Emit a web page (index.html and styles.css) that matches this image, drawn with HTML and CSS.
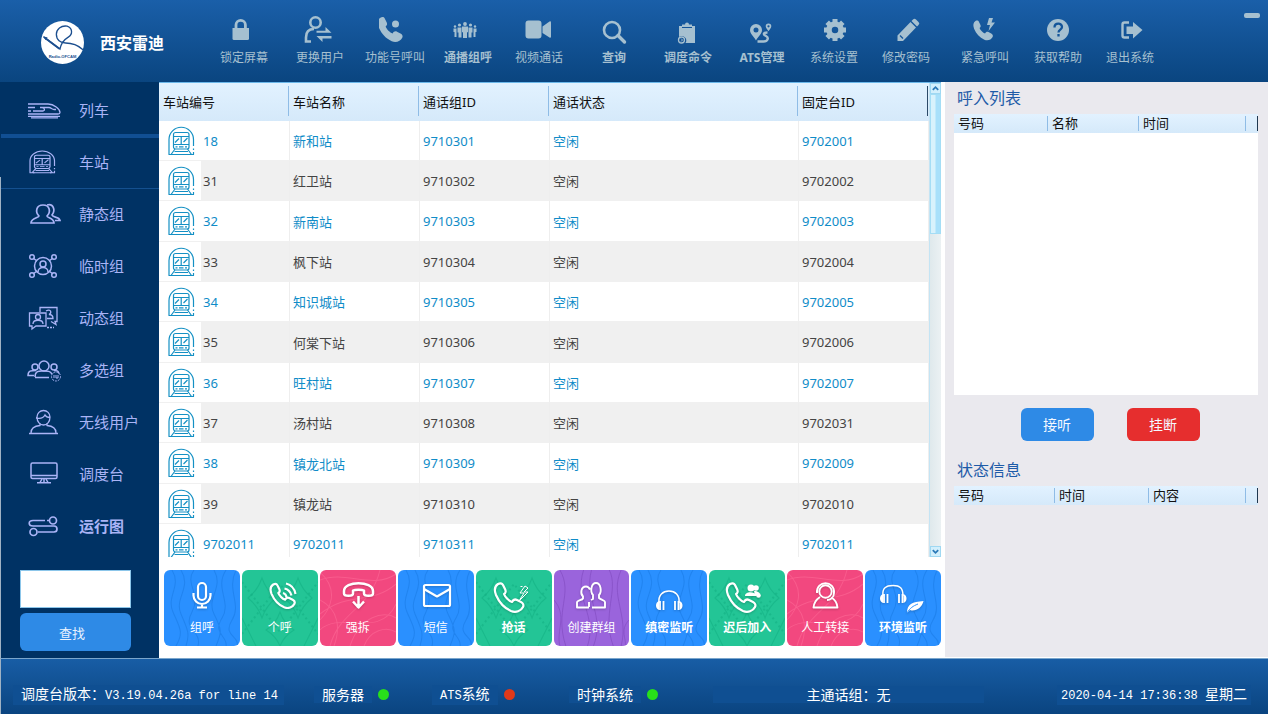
FILE: index.html
```html
<!DOCTYPE html>
<html lang="zh-CN">
<head>
<meta charset="utf-8">
<meta name="viewport" content="width=device-width, initial-scale=1">
<title>西安雷迪 调度台</title>
<link rel="stylesheet" href="styles.css">
</head>
<body>
<svg class="sprite" aria-hidden="true">
  <symbol id="station" viewBox="0 0 28 30" preserveAspectRatio="none">
    <g fill="none" stroke="currentColor" stroke-width="1.2">
      <path d="M2 28.500V13.500a12 12 0 0 1 24.500 0v6.500M26.500 22.500v1.500M26.500 26v2.500M1.500 28.500h5M22 28.500h5"/>
      <rect x="6.500" y="6.500" width="15.500" height="16.500" rx="2"/>
      <path d="M6.500 10.500h15.500M6.500 18.500h15.500M14.200 10.500v8M8 16.500l4-4M16.500 16l4-4M8.500 20.800h2M12 20.800h4.500M18 20.800h2"/>
      <path d="M8 23l-4 5.500M20.500 23l4 5.500M7.500 25.500h13.500M5 28.500h18.500"/>
    </g>
  </symbol>
  <symbol id="handset" viewBox="-1 -1 32 32">
    <path d="M4 2C1 4 0 8 2 13C5 20 10 26 17 29C22 31 27 29 29 25C30 23 29 21 27 20L23 18C21 17 19 18 18 20C15 19 11 15 10 12C12 11 12 9 11 7L9 3C8 1 6 1 4 2Z"/>
  </symbol>
</svg>

<header class="topbar">
  <div class="brand">
    <svg class="brand-logo" viewBox="0 0 42 42" role="img" aria-label="Radio-OFCAM">
      <circle cx="21" cy="21" r="21" fill="#fff"/>
      <path d="M2.500 15.500L18.500 27.500C19.500 22 22 18.500 27 15.500C31 13 31 7 25.500 5C19.500 4 15 8.500 15 13C15 18.500 19 21.500 24 21.500C31 21.500 36.500 24 41 28" fill="none" stroke="#1c4f8f" stroke-width="1.300"/>
      <path d="M2 15l4.500 1L4.500 18.500z" fill="#1c4f8f"/>
      <path d="M4 16.500L18 27" stroke="#1c4f8f" stroke-width="1.800"/>
      <text x="21" y="36" text-anchor="middle" class="logo-text">Radio-OFCAM</text>
    </svg>
    <h1>西安雷迪</h1>
  </div>
  <nav class="tools">
    <button type="button"><svg viewBox="0 0 32 32"><path d="M4.500 14h16.500v10.500a1.500 1.500 0 0 1-1.500 1.500H6a1.500 1.500 0 0 1-1.500-1.500z" fill="currentColor"/><path d="M8 14v-3a4.700 4.700 0 0 1 9.400 0v3" fill="none" stroke="currentColor" stroke-width="2.800"/></svg><span>锁定屏幕</span></button>
    <button type="button"><svg viewBox="0 0 32 32"><g fill="none" stroke="currentColor" stroke-width="2.600"><circle cx="11.500" cy="8.500" r="5.200"/><path d="M7 27.500H2v-4C2 18 5 15 10 15"/></g><path d="M12.500 16.800h9V13l6 5.800h-15zM27.500 22H12.500l6 6v-3.500h9z" fill="currentColor"/></svg><span>更换用户</span></button>
    <button type="button"><svg viewBox="0 0 32 32"><use href="#handset" x="-3" y="1" width="28" height="28" fill="currentColor"/><circle cx="16.500" cy="10" r="3.500" fill="currentColor"/></svg><span>功能号呼叫</span></button>
    <button type="button" class="strong"><svg viewBox="0 0 32 32"><g fill="currentColor"><circle cx="13" cy="10" r="1.900"/><path d="M10 12.500h6v6l-1-.5v6h-4v-6l-1 .5z"/><circle cx="7.500" cy="11" r="1.600"/><circle cx="18.500" cy="11" r="1.600"/><path d="M5.500 13.500h4v10h-3v-5h-1zM16.500 13.500h4v5h-1v5h-3zM1.500 14.500h3v8.500H2.500v-5h-1zM21.500 14.500h3v3.500h-1v5h-2z"/><circle cx="3" cy="12.500" r="1.200"/><circle cx="23" cy="12.500" r="1.200"/></g></svg><span>通播组呼</span></button>
    <button type="button"><svg viewBox="0 0 32 32"><path d="M5.500 6.500h10a3 3 0 0 1 3 3v12a3 3 0 0 1-3 3h-10a3 3 0 0 1-3-3v-12a3 3 0 0 1 3-3z" fill="currentColor"/><path d="M19.500 12.500L26.500 7.500a1 1 0 0 1 1.500.8v14.500a1 1 0 0 1-1.500.7L19.500 19z" fill="currentColor"/></svg><span>视频通话</span></button>
    <button type="button" class="strong"><svg viewBox="0 0 32 32"><circle cx="14" cy="16" r="8" fill="none" stroke="currentColor" stroke-width="2.600"/><path d="M20 21.500l6.500 6.500" stroke="currentColor" stroke-width="3.400" stroke-linecap="round"/></svg><span>查询</span></button>
    <button type="button" class="strong"><svg viewBox="0 0 32 32"><path d="M7 12h3v-1.500h3a2 2 0 0 1 4 0h3V12h3v17H13.500a4.500 4.500 0 0 0-6.500-6z" fill="currentColor"/><path d="M10 13.500h10" stroke="#135499" stroke-width="1"/><circle cx="9.500" cy="26" r="3" fill="none" stroke="currentColor" stroke-width="1.300"/><path d="M9 24.500l1.500 1.500L9 27.500" fill="none" stroke="currentColor"/></svg><span>调度命令</span></button>
    <button type="button" class="strong"><svg viewBox="0 0 32 32"><path fill-rule="evenodd" d="M10 10a6 6 0 0 1 6 6c0 4-4 6.500-6 10.500c-2-4-6-6.500-6-10.500a6 6 0 0 1 6-6zm0 3.500a2.500 2.500 0 1 0 0 5a2.500 2.500 0 0 0 0-5z" fill="currentColor"/><path fill-rule="evenodd" d="M22.500 9.500a2.800 2.800 0 0 1 2.800 2.800c0 2-1.800 3-2.800 5c-1-2-2.800-3-2.800-5a2.800 2.800 0 0 1 2.800-2.800zm0 1.700a1.100 1.100 0 1 0 0 2.200a1.100 1.100 0 0 0 0-2.200z" fill="currentColor"/><path d="M21.500 18.500C17 18.500 17 20.500 20 22S22 27.500 17.500 27.500H11.500" fill="none" stroke="currentColor" stroke-width="2.400"/></svg><span>ATS管理</span></button>
    <button type="button"><svg viewBox="0 0 32 32"><circle cx="17" cy="16" r="6" fill="none" stroke="currentColor" stroke-width="5.500"/><g stroke="currentColor" stroke-width="5"><path d="M17 5v4M17 23v4M6 16h4M24 16h4M9.200 8.200l3 3M21.800 20.800l3 3M24.800 8.200l-3 3M12.200 20.800l-3 3"/></g></svg><span>系统设置</span></button>
    <button type="button"><svg viewBox="0 0 32 32"><path d="M7.500 27v-5.500L20.500 8L26 13.500L13 27zM21.500 7l1.500-1.500a2 2 0 0 1 3 0L28.500 8a2 2 0 0 1 0 3L27 12.500z" fill="currentColor"/><path d="M10 21.500l3 3" stroke="#135499" stroke-width="1.200"/></svg><span>修改密码</span></button>
    <button type="button"><svg viewBox="0 0 32 32"><use href="#handset" x="3" y="5" width="22" height="22" fill="currentColor"/><path d="M20 4h4l-1.500 4.500H26L19.500 17l1.500-6h-3z" fill="currentColor"/></svg><span>紧急呼叫</span></button>
    <button type="button"><svg viewBox="0 0 32 32"><circle cx="16" cy="16" r="11" fill="currentColor"/><path d="M12.500 13.500c0-5 7.500-5 7.500-.5c0 2.800-3.500 2.500-3.500 5.500M16.500 20v2.500" fill="none" stroke="#135499" stroke-width="2.300"/></svg><span>获取帮助</span></button>
    <button type="button"><svg viewBox="0 0 32 32"><path d="M15 8.500H10.500a2 2 0 0 0-2 2v11a2 2 0 0 0 2 2H15" fill="none" stroke="currentColor" stroke-width="2.400"/><path d="M12.500 12.500H19V8l9.500 8L19 24.500V20h-6.500z" fill="currentColor"/></svg><span>退出系统</span></button>
  </nav>
  <button type="button" class="minimize" aria-label="最小化"></button>
</header>

<main class="workspace">
  <aside class="sidebar">
    <nav class="menu">
      <a href="#" class="first"><svg viewBox="0 0 36 28"><g fill="none" stroke="currentColor" stroke-width="1.300"><path d="M1 8h20c6 0 12 5 12 8.500c0 1-1 1.500-2 1.500H1M1 11.500h7M13 11.500h9c2 0 3 2 5 2h2M1 15h3M6 15h10c2 0 2-3.500-1-3.500M1 20.300h32M4 21.800h27"/></g></svg>列车</a>
      <a href="#" class="current"><svg viewBox="0 0 36 28"><use href="#station" x="1" y="2" width="28" height="24"/></svg>车站</a>
      <a href="#"><svg viewBox="0 0 36 28"><g fill="none" stroke="currentColor" stroke-width="1.700"><path d="M12 16C8 12 9 5 16 5s8 7 4 11c0 2 7 2 7 7H4c0-5 8-5 8-7z"/><path d="M20 5c6-2 9 5 5 10c1 3 7 1 8 5.500h-5"/></g></svg>静态组</a>
      <a href="#"><svg viewBox="0 0 36 28"><g fill="none" stroke="currentColor" stroke-width="1.500"><circle cx="16" cy="14" r="8.500"/><circle cx="16" cy="12" r="3"/><path d="M11 20c0-6 10-6 10 0M6 6l4 3M26 6l-4 3M6 22l4-3M26 22l-4-3"/><circle cx="5" cy="5" r="2.300"/><circle cx="27" cy="5" r="2.300"/><circle cx="5" cy="23" r="2.300"/><circle cx="27" cy="23" r="2.300"/></g></svg>临时组</a>
      <a href="#"><svg viewBox="0 0 36 28"><g fill="none" stroke="currentColor" stroke-width="1.300"><path d="M13 8V3.500h17v14h-2l1 3l-5-3M3 9h16v13H9l-4 3v-3H2.500V9z"/><circle cx="11" cy="13" r="2.500"/><path d="M6 20c0-5 10-5 10 0M19 7c5-3 6 2 3 3.500c3 0 4 2 4 4h-6"/><path d="M20 23.500h7" stroke-dasharray="2 1"/></g></svg>动态组</a>
      <a href="#"><svg viewBox="0 0 36 28"><g fill="none" stroke="currentColor" stroke-width="1.500"><circle cx="17" cy="10" r="5"/><circle cx="8" cy="11" r="3"/><circle cx="27" cy="11" r="3"/><path d="M8 21c0-7 5-6 9-6s6 0 8 3M8 21.500h14M7 19.500H1c0-5 3-5 8-5M27 14.500c3 0 4 0 5 3"/><circle cx="29" cy="20.500" r="4.500" stroke-width="1" stroke-dasharray="2 1"/><path d="M27 19v3M29 19v3h2v-3" stroke-width="1"/></g></svg>多选组</a>
      <a href="#"><svg viewBox="0 0 36 28"><g fill="none" stroke="currentColor" stroke-width="1.300"><path d="M10 9a6.500 6.500 0 0 1 13 0c0 5-3 8-6.500 8S10 14 10 9zM9 10c5 1 8-1 9-3c1 2 3 2.500 5 2.500"/><path d="M13 15.500v2C6 18 4 21 4 25M20 15.500v2c7 .5 9 3.500 9 7.500M2 25.500h29"/></g></svg>无线用户</a>
      <a href="#"><svg viewBox="0 0 36 28"><g fill="none" stroke="currentColor" stroke-width="1.500"><rect x="4" y="3" width="26" height="15.500" rx="1.500"/><path d="M4 15.500h26M15 19l-2 3.500M19 19l2 3.500M10 22.800h14M17 18v4"/></g></svg>调度台</a>
      <a href="#" class="strong"><svg viewBox="0 0 36 28"><g fill="none" stroke="currentColor" stroke-width="1.700"><path d="M18 8.500H6c-5 0-5 5.500 0 5.500h21c4 0 4 6 0 6H11M20 8.500h2"/><circle cx="26" cy="8.500" r="3.500"/><circle cx="6.500" cy="20" r="3.500"/></g></svg>运行图</a>
    </nav>
    <form class="search">
      <input type="text" aria-label="查找内容">
      <button type="button">查找</button>
    </form>
  </aside>

  <section class="center">
    <div class="stations">
      <table class="station-table">
        <colgroup><col class="c-no"><col class="c-mid"><col class="c-mid"><col><col class="c-mid"></colgroup>
        <thead><tr><th>车站编号</th><th>车站名称</th><th>通话组ID</th><th>通话状态</th><th>固定台ID</th></tr></thead>
        <tbody>
          <tr><td><svg><use href="#station"/></svg>18</td><td>新和站</td><td>9710301</td><td>空闲</td><td>9702001</td></tr>
          <tr><td><svg><use href="#station"/></svg>31</td><td>红卫站</td><td>9710302</td><td>空闲</td><td>9702002</td></tr>
          <tr><td><svg><use href="#station"/></svg>32</td><td>新南站</td><td>9710303</td><td>空闲</td><td>9702003</td></tr>
          <tr><td><svg><use href="#station"/></svg>33</td><td>枫下站</td><td>9710304</td><td>空闲</td><td>9702004</td></tr>
          <tr><td><svg><use href="#station"/></svg>34</td><td>知识城站</td><td>9710305</td><td>空闲</td><td>9702005</td></tr>
          <tr><td><svg><use href="#station"/></svg>35</td><td>何棠下站</td><td>9710306</td><td>空闲</td><td>9702006</td></tr>
          <tr><td><svg><use href="#station"/></svg>36</td><td>旺村站</td><td>9710307</td><td>空闲</td><td>9702007</td></tr>
          <tr><td><svg><use href="#station"/></svg>37</td><td>汤村站</td><td>9710308</td><td>空闲</td><td>9702031</td></tr>
          <tr><td><svg><use href="#station"/></svg>38</td><td>镇龙北站</td><td>9710309</td><td>空闲</td><td>9702009</td></tr>
          <tr><td><svg><use href="#station"/></svg>39</td><td>镇龙站</td><td>9710310</td><td>空闲</td><td>9702010</td></tr>
          <tr><td><svg><use href="#station"/></svg>9702011</td><td>9702011</td><td>9710311</td><td>空闲</td><td>9702011</td></tr>
        </tbody>
      </table>
      <div class="scroller">
        <button type="button" aria-label="向上"><svg viewBox="0 0 10 10"><path d="M2 6.500l3-3l3 3"/></svg></button>
        <div class="track"><div class="thumb"></div></div>
        <button type="button" aria-label="向下"><svg viewBox="0 0 10 10"><path d="M2 3.500l3 3l3-3"/></svg></button>
      </div>
    </div>
    <div class="actions">
      <button type="button" class="blue"><svg viewBox="0 0 48 36"><g><rect x="20" y="5" width="8" height="17" rx="4"/><path d="M15.500 15v2.500a8.500 8.500 0 0 0 17 0V15M24 26v3M19 29.500h10"/></g></svg><span>组呼</span></button>
      <button type="button" class="green"><svg viewBox="0 0 48 36"><use href="#handset" x="13" y="4" width="27" height="27" fill="none" stroke="currentColor" stroke-width="2.600"/><path d="M28.500 10.500c4 1 6 3 7 7M30 5.500c6 1.500 8.500 5 9.500 10.500M27 15c2 .5 3 1.500 3.500 4" fill="none"/></svg><span>个呼</span></button>
      <button type="button" class="pink"><svg viewBox="0 0 48 36"><g stroke-width="2.500"><path d="M10 13c0-10.500 29-10.500 29 0v2.500c0 3-9 3-9 0v-3c-2-1-9-1-11 0v3c0 3-9 3-9 0zM24.500 18v11M19 23.500l5.500 6l5.500-6"/></g></svg><span>强拆</span></button>
      <button type="button" class="blue"><svg viewBox="0 0 48 36"><rect x="12" y="7" width="26" height="21" rx="1.500"/><path d="M12 11l13 7.500L38 11"/></svg><span>短信</span></button>
      <button type="button" class="green strong"><svg viewBox="0 0 48 36"><use href="#handset" x="3" y="3" width="32" height="32" fill="none" stroke="currentColor" stroke-width="2.200"/><path d="M35 8l-5 7h4l-5 8l9-9h-4l4-4zM30.500 8.500h2" stroke-width="1"/></svg><span>抢话</span></button>
      <button type="button" class="purple"><svg viewBox="0 0 48 36"><g stroke-width="1.900"><path d="M25 29.500h13v-5.500c0-2-4-2-6-4v-3c3-3 2-12-3-12s-6 9-3 12v4l-2 1M22 29.500H10v-5c0-2.500 5-2 6-4v-2c-3-3-2-10 3-10c2 0 3 1 4 3M22 29v-5"/></g></svg><span>创建群组</span></button>
      <button type="button" class="blue strong"><svg viewBox="0 0 48 36"><path d="M14 25c-1-8 4-12 10-12s11 4 10 12" stroke-width="1.500"/><path d="M15 23v9M18.500 23v9M30 23v9M33.500 23v9" stroke-width="1.800"/><path d="M14 23c-4 1-4 8 0 9zM34.500 23c4 1 4 8 0 9z" class="solid"/></svg><span>缜密监听</span></button>
      <button type="button" class="green strong"><svg viewBox="0 0 48 36"><use href="#handset" x="2" y="3" width="32" height="32" fill="none" stroke="currentColor" stroke-width="2.200"/><g class="solid"><circle cx="28" cy="10" r="3.500"/><circle cx="33" cy="10" r="2.800"/><path d="M22 18c0-5 10-5 12 0zM31 13c4 0 6 2 6 4h-5z"/><circle cx="35.500" cy="17.500" r="2.300"/></g></svg><span>迟后加入</span></button>
      <button type="button" class="pink"><svg viewBox="0 0 48 36"><g stroke-width="1.900"><circle cx="24.500" cy="13.500" r="6.200"/><path d="M16 15c-1-13 18-13 17 0c0 5-4 7-7 7M19 19c-3 2-6 5-6.500 10.500h24C36 24 33 21 30 19.500"/></g></svg><span>人工转接</span></button>
      <button type="button" class="blue strong"><svg viewBox="0 0 48 36"><path d="M4 18C3 10 7 7.500 14 7.500S24 10 24 18" stroke-width="1.500"/><path d="M5 16v9M8.500 16v9M20 16v9M23.500 16v9" stroke-width="1.800"/><path d="M4 16c-4 1-4 8 0 9zM24.500 16c4 1 4 8 0 9z" class="solid"/><path d="M28 35c0-9 5-11 16.500-12C43 30 36 34 31 32z" class="solid"/><path d="M28 35c3-5 6-7 11-9" stroke="#2a90ff" stroke-width="1"/></svg><span>环境监听</span></button>
    </div>
  </section>

  <aside class="calls">
    <h2>呼入列表</h2>
    <div class="call-box">
      <table class="mini">
        <colgroup><col class="m-94"><col class="m-91"><col><col class="m-12"></colgroup>
        <thead><tr><th>号码</th><th>名称</th><th>时间</th><th></th></tr></thead>
      </table>
    </div>
    <div class="call-buttons">
      <button type="button" class="answer">接听</button>
      <button type="button" class="hangup">挂断</button>
    </div>
    <h2>状态信息</h2>
    <table class="mini">
      <colgroup><col class="m-101"><col class="m-94"><col><col class="m-12"></colgroup>
      <thead><tr><th>号码</th><th>时间</th><th>内容</th><th></th></tr></thead>
    </table>
  </aside>
</main>

<footer class="statusbar">
  <div><span class="chip wide">调度台版本：<span class="mono">V3.19.04.26a for line 14</span></span></div>
  <div><span class="chip">服务器</span><i class="dot on"></i></div>
  <div><span class="chip"><span class="mono">ATS</span>系统</span><i class="dot off"></i></div>
  <div><span class="chip">时钟系统</span><i class="dot on"></i></div>
  <div><span class="chip wide centered">主通话组：无</span></div>
  <div><span class="chip time"><span class="mono">2020-04-14 17:36:38 </span>星期二</span></div>
</footer>
</body>
</html>
```

FILE: styles.css
```css
* {
  box-sizing: border-box;
}

body {
  margin: 0;
  height: 100vh;
  display: flex;
  flex-direction: column;
  overflow: hidden;
  background: #fff;
  font-family: "Noto Sans", "Noto Sans CJK SC", sans-serif;
  font-size: 13px;
}

button,
input {
  font-family: inherit;
  margin: 0;
}

button {
  border: 0;
  padding: 0;
  background: none;
  cursor: pointer;
}

.sprite {
  display: none;
}

/* top bar */

.topbar {
  display: flex;
  height: 82px;
  background: linear-gradient(#1a5fa9, #0a4580);
}

.brand {
  display: flex;
  align-items: center;
  gap: 16px;
  width: 206px;
  padding: 2px 0 0 41px;
  color: #fff;
}

.brand-logo {
  width: 43px;
  height: 43px;
  flex: none;
}

.logo-text {
  font: bold 4px "Liberation Sans", sans-serif;
  fill: #1c4f8f;
}

.brand h1 {
  margin: 0;
  font-size: 16px;
  white-space: nowrap;
}

.tools {
  flex: 1;
  display: grid;
  grid-template-columns: 76fr 76fr 74fr 72fr 70fr 80fr 68fr 80fr 64fr 80fr 78fr 68fr 76fr;
  align-items: start;
  padding-top: 14px;
}

.tools button {
  display: flex;
  flex-direction: column;
  align-items: center;
  gap: 3px;
  color: #a6c0d0;
  font-size: 12px;
  line-height: 18px;
  white-space: nowrap;
}

.tools svg {
  width: 32px;
  height: 32px;
}

.tools .strong,
.menu .strong,
.actions .strong {
  font-weight: bold;
}

.minimize {
  width: 16px;
  height: 5px;
  margin: 13px 8px 0 76px;
  border-radius: 2px;
  background: #a6c0d0;
}

/* workspace */

.workspace {
  flex: 1;
  min-height: 0;
  display: flex;
}

.sidebar {
  width: 159px;
  flex: none;
  display: flex;
  flex-direction: column;
  justify-content: space-between;
  padding-left: 1px;
  background: linear-gradient(#9fb2c4, #9fb2c4) 0 100% / 1px calc(100% - 95px) no-repeat #003264;
}

.menu a {
  display: flex;
  align-items: center;
  gap: 16px;
  height: 52px;
  padding: 0 0 3px 26px;
  color: #aab4f6;
  font-size: 15px;
  text-decoration: none;
  white-space: nowrap;
}

.menu .first {
  height: 56px;
  padding: 3px 0 0 26px;
  border-bottom: 4px solid #114f93;
}

.menu .current {
  height: 51px;
  border-bottom: 1px solid #14508f;
}

.menu svg {
  width: 36px;
  height: 28px;
  flex: none;
}

.search {
  display: flex;
  flex-direction: column;
  gap: 5px;
  padding: 0 28px 7px 19px;
}

.search input {
  width: 100%;
  height: 38px;
  border: 1px solid #8cc6ea;
  background: #fff;
}

.search button {
  height: 38px;
  padding-right: 7px;
  border-radius: 6px;
  background: #2e8ae6;
  color: #e8f2ff;
  font-size: 13px;
}

/* station list */

.center {
  flex: 1;
  min-width: 0;
  display: flex;
  flex-direction: column;
  padding-right: 4px;
}

.stations {
  flex: 1;
  min-height: 0;
  overflow: hidden;
  display: flex;
  align-items: flex-start;
  border-top: 1px solid #6cb8ea;
}

.station-table {
  flex: 1;
  width: 100%;
  table-layout: fixed;
  border-collapse: separate;
  border-spacing: 0;
}

.c-no {
  width: 131px;
}

.c-mid {
  width: 130px;
}

.station-table thead tr {
  background: linear-gradient(#e2f2ff, #d5e9fa);
}

.station-table th {
  height: 38px;
  padding: 0 0 1px 3px;
  background: linear-gradient(#8fbce6, #8fbce6) calc(100% - 1px) 3px / 1px 30px no-repeat;
  color: #111;
  font-weight: normal;
  text-align: left;
}

.station-table th:first-child {
  padding-left: 4px;
}

.station-table th:last-child {
  background-image: linear-gradient(#2c4a68, #2c4a68);
}

.station-table td {
  height: 40px;
  padding: 0 0 0 3px;
  border-right: 1px solid #eee;
  border-bottom: 1px solid #f0f0f0;
  color: #0f8cc8;
  white-space: nowrap;
}

.station-table tr:nth-child(3n) td {
  height: 41px;
}

.station-table td:first-child {
  padding-left: 8px;
}

.station-table td svg {
  width: 28px;
  height: 30px;
  margin-right: 8px;
  color: #1490c4;
  vertical-align: -10px;
}

.station-table tbody tr:nth-child(even) td {
  background: #f0f0f0;
  color: #444;
}

.station-table tbody tr:nth-child(even) td:first-child {
  background: linear-gradient(to right, #fff 42px, #f0f0f0 42px);
}

.scroller {
  align-self: stretch;
  width: 12px;
  display: flex;
  flex-direction: column;
  border-left: 1px solid #c4e4f4;
}

.scroller button {
  height: 11px;
  border: 1px solid #9fd8f2;
  background: #d2effc;
}

.scroller svg {
  display: block;
  width: 9px;
  height: 9px;
  fill: none;
  stroke: #2c7ab8;
  stroke-width: 2;
}

.track {
  flex: 1;
  background: linear-gradient(to right, #dfe9ec, #ebf1f3);
}

.thumb {
  height: 31%;
  border: 1px solid #a4ddf5;
  background: linear-gradient(to right, #d8f2fc 40%, #a8e0fa 60%);
}

/* action tiles */

.actions {
  display: grid;
  grid-template-columns: repeat(10, 1fr);
  gap: 2px;
  padding: 13px 0 12px 5px;
}

.actions button {
  height: 76px;
  display: flex;
  flex-direction: column;
  align-items: center;
  gap: 5px;
  padding-top: 8px;
  border-radius: 6px;
  color: #fff;
  font-size: 12px;
  line-height: 18px;
  white-space: nowrap;
}

.actions svg {
  width: 48px;
  height: 36px;
  fill: none;
  stroke: currentColor;
  stroke-width: 2.2;
  stroke-linejoin: round;
  filter: drop-shadow(0 1px 1px rgba(0, 0, 0, 0.2));
}

.actions .solid {
  fill: currentColor;
  stroke: none;
}

.blue {
  background: #2a90ff url("data:image/svg+xml,%3Csvg xmlns='http://www.w3.org/2000/svg' viewBox='0 0 76 76'%3E%3Cg fill='none' stroke='%231a7be4' stroke-opacity='.6'%3E%3Cpath d='M8 0C18 16 2 26 9 42S20 62 12 76M17 0C28 18 10 28 17 44S26 64 22 76M30 0C20 14 38 24 28 42S38 60 34 76M50 0C60 18 42 28 50 44S58 62 52 76M62 0C50 18 68 32 58 48S64 66 62 76M72 0C62 20 78 34 68 50S76 66 73 76'/%3E%3C/g%3E%3C/svg%3E") center / cover;
}

.green {
  background: #23c596 url("data:image/svg+xml,%3Csvg xmlns='http://www.w3.org/2000/svg' viewBox='0 0 76 76'%3E%3Cg fill='none' stroke='%2314b084' stroke-opacity='.6'%3E%3Cpath d='M20 8Q24 20 34 28Q24 36 20 48Q16 36 6 28Q16 20 20 8ZM56 8Q60 20 70 28Q60 36 56 48Q52 36 42 28Q52 20 56 8ZM38 42Q42 54 52 60Q42 66 38 76Q34 66 24 60Q34 54 38 42ZM0 48L14 76M76 48L62 76'/%3E%3Cpath stroke-width='2' stroke-dasharray='2 3' d='M0 12L38 62L76 12M0 64L38 14L76 64'/%3E%3C/g%3E%3C/svg%3E") center / cover;
}

.pink {
  background: #f2487f url("data:image/svg+xml,%3Csvg xmlns='http://www.w3.org/2000/svg' viewBox='0 0 76 76'%3E%3Cg fill='none' stroke='%23ff6f9c' stroke-opacity='.5'%3E%3Cpath d='M0 10C26 0 52 20 76 4M0 44C30 20 50 36 76 14M0 60C20 40 60 70 76 34M10 76C20 40 50 40 60 0M30 76C40 46 64 40 76 48M0 30C20 40 20 60 14 76M44 76C50 60 66 56 76 62M0 2C20 20 10 40 0 50'/%3E%3C/g%3E%3C/svg%3E") center / cover;
}

.purple {
  background: #9a64dc url("data:image/svg+xml,%3Csvg xmlns='http://www.w3.org/2000/svg' viewBox='0 0 76 76'%3E%3Cg fill='none' stroke='%237f48bd' stroke-opacity='.6'%3E%3Cpath d='M6 0C20 24 0 40 12 76M0 30C14 46 2 60 6 76M30 0C20 30 44 44 34 76M38 0C30 30 52 44 40 76M56 0C66 20 48 44 60 76M68 0C56 26 76 44 68 76M76 50C66 60 74 70 72 76'/%3E%3C/g%3E%3C/svg%3E") center / cover;
}

/* calls and status */

.calls {
  width: 323px;
  flex: none;
  display: flex;
  flex-direction: column;
  padding: 4px 10px 0 9px;
  border-bottom: 1px solid #fff;
  background: #eae9ee;
}

.calls h2 {
  margin: 0 0 4px;
  padding-left: 3px;
  color: #1e5ba8;
  font-size: 16px;
  font-weight: normal;
  line-height: 24px;
}

.call-box {
  flex: 281 1 0;
  background: #fff;
}

.calls > .mini {
  margin-bottom: 152px;
}

.mini {
  width: 100%;
  table-layout: fixed;
  border-collapse: separate;
  border-spacing: 0;
}

.mini thead tr {
  background: linear-gradient(#e2f2ff, #d5e9fa);
}

.mini th {
  height: 19px;
  padding: 0 0 0 4px;
  background: linear-gradient(#8fbce6, #8fbce6) 100% 2px / 1px 15px no-repeat;
  color: #111;
  font-weight: normal;
  line-height: 19px;
  text-align: left;
}

.mini th:last-child {
  background-image: linear-gradient(#1f3850, #1f3850);
}

.m-94 { width: 94px; }
.m-91 { width: 91px; }
.m-101 { width: 101px; }
.m-12 { width: 12px; }

.call-buttons {
  display: flex;
  justify-content: center;
  gap: 33px;
  padding: 13px 0 17px 8px;
}

.call-buttons button {
  width: 73px;
  height: 33px;
  padding-bottom: 2px;
  border-radius: 6px;
  color: #f4f8ff;
  font-size: 14px;
}

.answer {
  background: #2e8ae6;
}

.hangup {
  background: #e62e2e;
}

/* status bar */

.statusbar {
  height: 56px;
  display: grid;
  grid-template-columns: 301fr 118fr 137fr 144fr 344fr 198fr;
  align-items: center;
  padding: 16px 13px 0 12px;
  border-top: 1px solid #7ba6cc;
  border-left: 1px solid #9fb2c4;
  background: linear-gradient(#185da5, #0a4480);
  color: #fff;
  font-size: 14px;
  line-height: 17px;
  white-space: nowrap;
}

.statusbar > div {
  display: flex;
  align-items: center;
  gap: 6px;
}

.chip {
  padding: 0 8px;
  background: #0f4f92;
}

.wide {
  width: 271px;
}

.centered {
  text-align: center;
}

.time {
  padding: 0 4px;
}

.mono {
  font-family: "Liberation Mono", monospace;
  font-size: 12px;
  white-space: pre;
}

.dot {
  width: 11px;
  height: 11px;
  border-radius: 50%;
}

.on {
  background: #28e01a;
}

.off {
  background: #e0391a;
}
```
